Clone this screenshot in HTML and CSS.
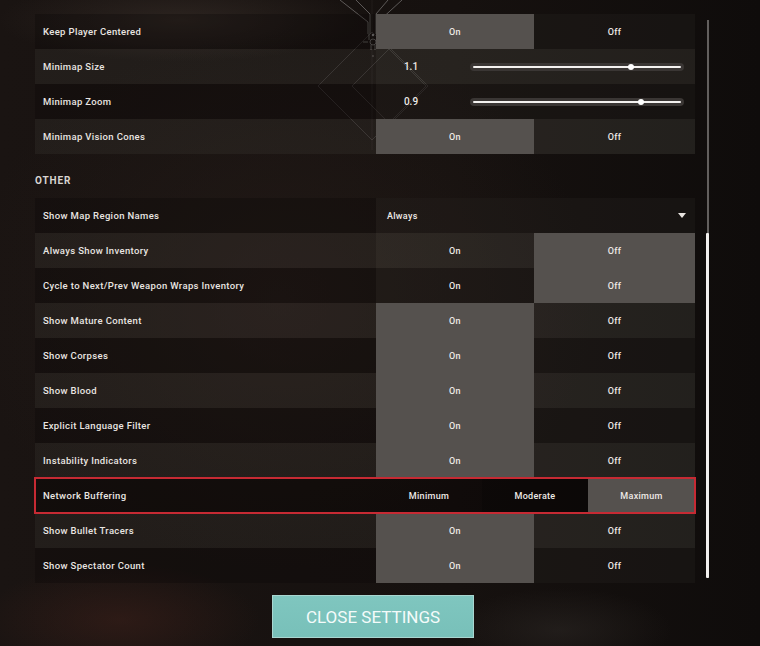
FILE: index.html
```html
<!DOCTYPE html>
<html lang="en">
<head>
<meta charset="utf-8">
<title>Settings</title>
<link rel="stylesheet" href="styles.css">
</head>
<body>
<div class="screen">
  <svg class="deco" width="760" height="646" viewBox="0 0 760 646" aria-hidden="true">
    <g fill="none" stroke="rgba(255,255,255,0.11)" stroke-width="1">
      <path d="M372 32 L426 86 L372 140 L318 86 Z"/>
      <path d="M390 48 L428 86 L390 124 L352 86 Z"/>
      <path d="M372 0 L372 150" stroke="rgba(255,255,255,0.05)"/>
    </g>
    <g fill="none" stroke="rgba(255,255,255,0.3)" stroke-width="1">
      <path d="M340 0 L368 22 L368 34"/>
      <path d="M402 0 L378 22 L378 34"/>
      <path d="M356 0 L370 14 L370 34"/>
      <path d="M388 0 L376 14 L376 34"/>
      <path d="M369 34 L369 40 M377 34 L377 40"/>
      <circle cx="373" cy="42" r="3"/>
      <path d="M363 42 L368 42 M378 42 L383 42 M371 45 L371 50 M375 45 L375 50"/>
    </g>
    <circle cx="373" cy="35" r="1.2" fill="rgba(255,255,255,0.45)"/>
    <circle cx="373" cy="56" r="0.8" fill="rgba(255,255,255,0.3)"/>
  </svg>

  <div class="layout">
    <div class="panel">
      <div class="list">
        <div class="row">
          <div class="label">Keep Player Centered</div>
          <div class="opts two"><div class="opt sel">On</div><div class="opt">Off</div></div>
        </div>
        <div class="row alt">
          <div class="label">Minimap Size</div>
          <div class="slider-cell">
            <div class="val">1.1</div>
            <div class="track"><div class="fill"></div><div class="thumb" style="left:75%"></div></div>
          </div>
        </div>
        <div class="row">
          <div class="label">Minimap Zoom</div>
          <div class="slider-cell">
            <div class="val">0.9</div>
            <div class="track"><div class="fill"></div><div class="thumb" style="left:80%"></div></div>
          </div>
        </div>
        <div class="row alt">
          <div class="label">Minimap Vision Cones</div>
          <div class="opts two"><div class="opt sel">On</div><div class="opt">Off</div></div>
        </div>
      </div>

      <div class="section-title">OTHER</div>

      <div class="list">
        <div class="row">
          <div class="label">Show Map Region Names</div>
          <div class="dropdown"><span>Always</span><span class="caret"></span></div>
        </div>
        <div class="row alt">
          <div class="label">Always Show Inventory</div>
          <div class="opts two"><div class="opt">On</div><div class="opt sel">Off</div></div>
        </div>
        <div class="row">
          <div class="label">Cycle to Next/Prev Weapon Wraps Inventory</div>
          <div class="opts two"><div class="opt">On</div><div class="opt sel">Off</div></div>
        </div>
        <div class="row alt">
          <div class="label">Show Mature Content</div>
          <div class="opts two"><div class="opt sel">On</div><div class="opt">Off</div></div>
        </div>
        <div class="row">
          <div class="label">Show Corpses</div>
          <div class="opts two"><div class="opt sel">On</div><div class="opt">Off</div></div>
        </div>
        <div class="row alt">
          <div class="label">Show Blood</div>
          <div class="opts two"><div class="opt sel">On</div><div class="opt">Off</div></div>
        </div>
        <div class="row">
          <div class="label">Explicit Language Filter</div>
          <div class="opts two"><div class="opt sel">On</div><div class="opt">Off</div></div>
        </div>
        <div class="row alt">
          <div class="label">Instability Indicators</div>
          <div class="opts two"><div class="opt sel">On</div><div class="opt">Off</div></div>
        </div>
        <div class="row highlight">
          <div class="label">Network Buffering</div>
          <div class="opts three"><div class="opt clear">Minimum</div><div class="opt dark">Moderate</div><div class="opt sel">Maximum</div></div>
        </div>
        <div class="row alt">
          <div class="label">Show Bullet Tracers</div>
          <div class="opts two"><div class="opt sel">On</div><div class="opt">Off</div></div>
        </div>
        <div class="row">
          <div class="label">Show Spectator Count</div>
          <div class="opts two"><div class="opt sel">On</div><div class="opt">Off</div></div>
        </div>
      </div>

      <div class="footer">
        <button class="close">CLOSE SETTINGS</button>
      </div>
    </div>

    <div class="scroll"><div class="scroll-thumb"></div></div>
  </div>
</div>
</body>
</html>
```

FILE: styles.css
```css
* { box-sizing: border-box; }

html, body {
  margin: 0;
  padding: 0;
  width: 760px;
  height: 646px;
  overflow: hidden;
}

body {
  font-family: Roboto, "Liberation Sans", sans-serif;
  color: #e8e4e0;
}

.screen {
  position: relative;
  width: 760px;
  height: 646px;
  overflow: hidden;
  background:
    radial-gradient(ellipse 260px 60px at 180px 20px, rgba(60, 50, 44, 0.55), transparent 70%),
    radial-gradient(ellipse 200px 80px at 120px 620px, rgba(70, 35, 28, 0.45), transparent 70%),
    radial-gradient(ellipse 160px 60px at 560px 630px, rgba(50, 45, 42, 0.45), transparent 70%),
    radial-gradient(ellipse 420px 360px at 280px 300px, rgba(40, 30, 26, 0.6), transparent 75%),
    linear-gradient(90deg, #1a1412 0%, #16110f 60%, #0f0c0b 100%);
}

.deco {
  position: absolute;
  left: 0;
  top: 0;
  pointer-events: none;
}

.layout {
  position: relative;
  display: flex;
  padding: 14px 0 0 35px;
}

.panel {
  width: 660px;
}

.list {
  display: flex;
  flex-direction: column;
}

.row {
  display: grid;
  grid-template-columns: 341px 1fr;
  height: 35px;
  background: rgba(10, 7, 6, 0.3);
}

.row.alt {
  background: rgba(255, 245, 235, 0.045);
}

.row.highlight {
  outline: 2px solid #c62a33;
  outline-offset: -1px;
  position: relative;
  z-index: 1;
  background: rgba(8, 5, 4, 0.45);
}

.label {
  display: flex;
  align-items: center;
  padding-left: 8px;
  font-size: 9.5px;
  font-weight: 500;
  letter-spacing: 0.35px;
  color: #e9e5e1;
}

.opts {
  display: grid;
}

.opts.two {
  grid-template-columns: 158px 1fr;
}

.opts.three {
  grid-template-columns: 106px 106px 1fr;
}

.opt {
  display: flex;
  align-items: center;
  justify-content: center;
  font-size: 9px;
  font-weight: 500;
  letter-spacing: 0.3px;
  color: #eeeae6;
  background: rgba(255, 245, 235, 0.04);
}

.opt.sel {
  background: #55514e;
}

.opt.clear {
  background: transparent;
}

.opt.dark {
  background: rgba(0, 0, 0, 0.16);
}

.slider-cell {
  display: grid;
  grid-template-columns: 70px 214px;
  column-gap: 24px;
  align-items: center;
  background: rgba(255, 245, 235, 0.035);
}

.val {
  text-align: center;
  font-size: 10px;
  font-weight: 500;
  color: #eeeae6;
}

.track {
  position: relative;
  height: 8px;
  border-radius: 4px;
  background: #3a3634;
  padding: 3px 3px;
}

.fill {
  height: 2px;
  border-radius: 1px;
  background: #f4f2f0;
}

.thumb {
  position: absolute;
  top: 1px;
  width: 6px;
  height: 6px;
  margin-left: -3px;
  border-radius: 50%;
  background: #ffffff;
}

.dropdown {
  display: flex;
  align-items: center;
  justify-content: space-between;
  padding: 0 9px 0 11px;
  background: rgba(255, 245, 235, 0.04);
  font-size: 9px;
  font-weight: 500;
  letter-spacing: 0.3px;
  color: #eeeae6;
}

.caret {
  width: 0;
  height: 0;
  border-left: 4px solid transparent;
  border-right: 4px solid transparent;
  border-top: 5px solid #e8e4e0;
}

.section-title {
  height: 44px;
  padding: 21px 0 0 0;
  line-height: 12px;
  font-size: 10px;
  font-weight: 700;
  letter-spacing: 0.9px;
  color: #d9d5d1;
}

.footer {
  padding: 12px 0 0 237px;
}

.close {
  position: relative;
  width: 202px;
  height: 43px;
  border: 1px solid #a9d6d0;
  background: linear-gradient(180deg, #7fc6bf 0%, #78c0b9 100%);
  color: #f4fbfa;
  font-family: Roboto, "Liberation Sans", sans-serif;
  font-size: 17px;
  font-weight: 400;
  letter-spacing: 0;
  padding: 0;
  cursor: pointer;
}

.scroll {
  position: relative;
  margin: 6px 0 0 11px;
  width: 3px;
  height: 558px;
  display: flex;
  justify-content: center;
}

.scroll::before {
  content: "";
  width: 2px;
  height: 100%;
  background: rgba(200, 196, 192, 0.45);
}

.scroll-thumb {
  position: absolute;
  left: 0;
  top: 213px;
  width: 3px;
  height: 345px;
  background: #f2f0ee;
  border-radius: 1px;
}
```
